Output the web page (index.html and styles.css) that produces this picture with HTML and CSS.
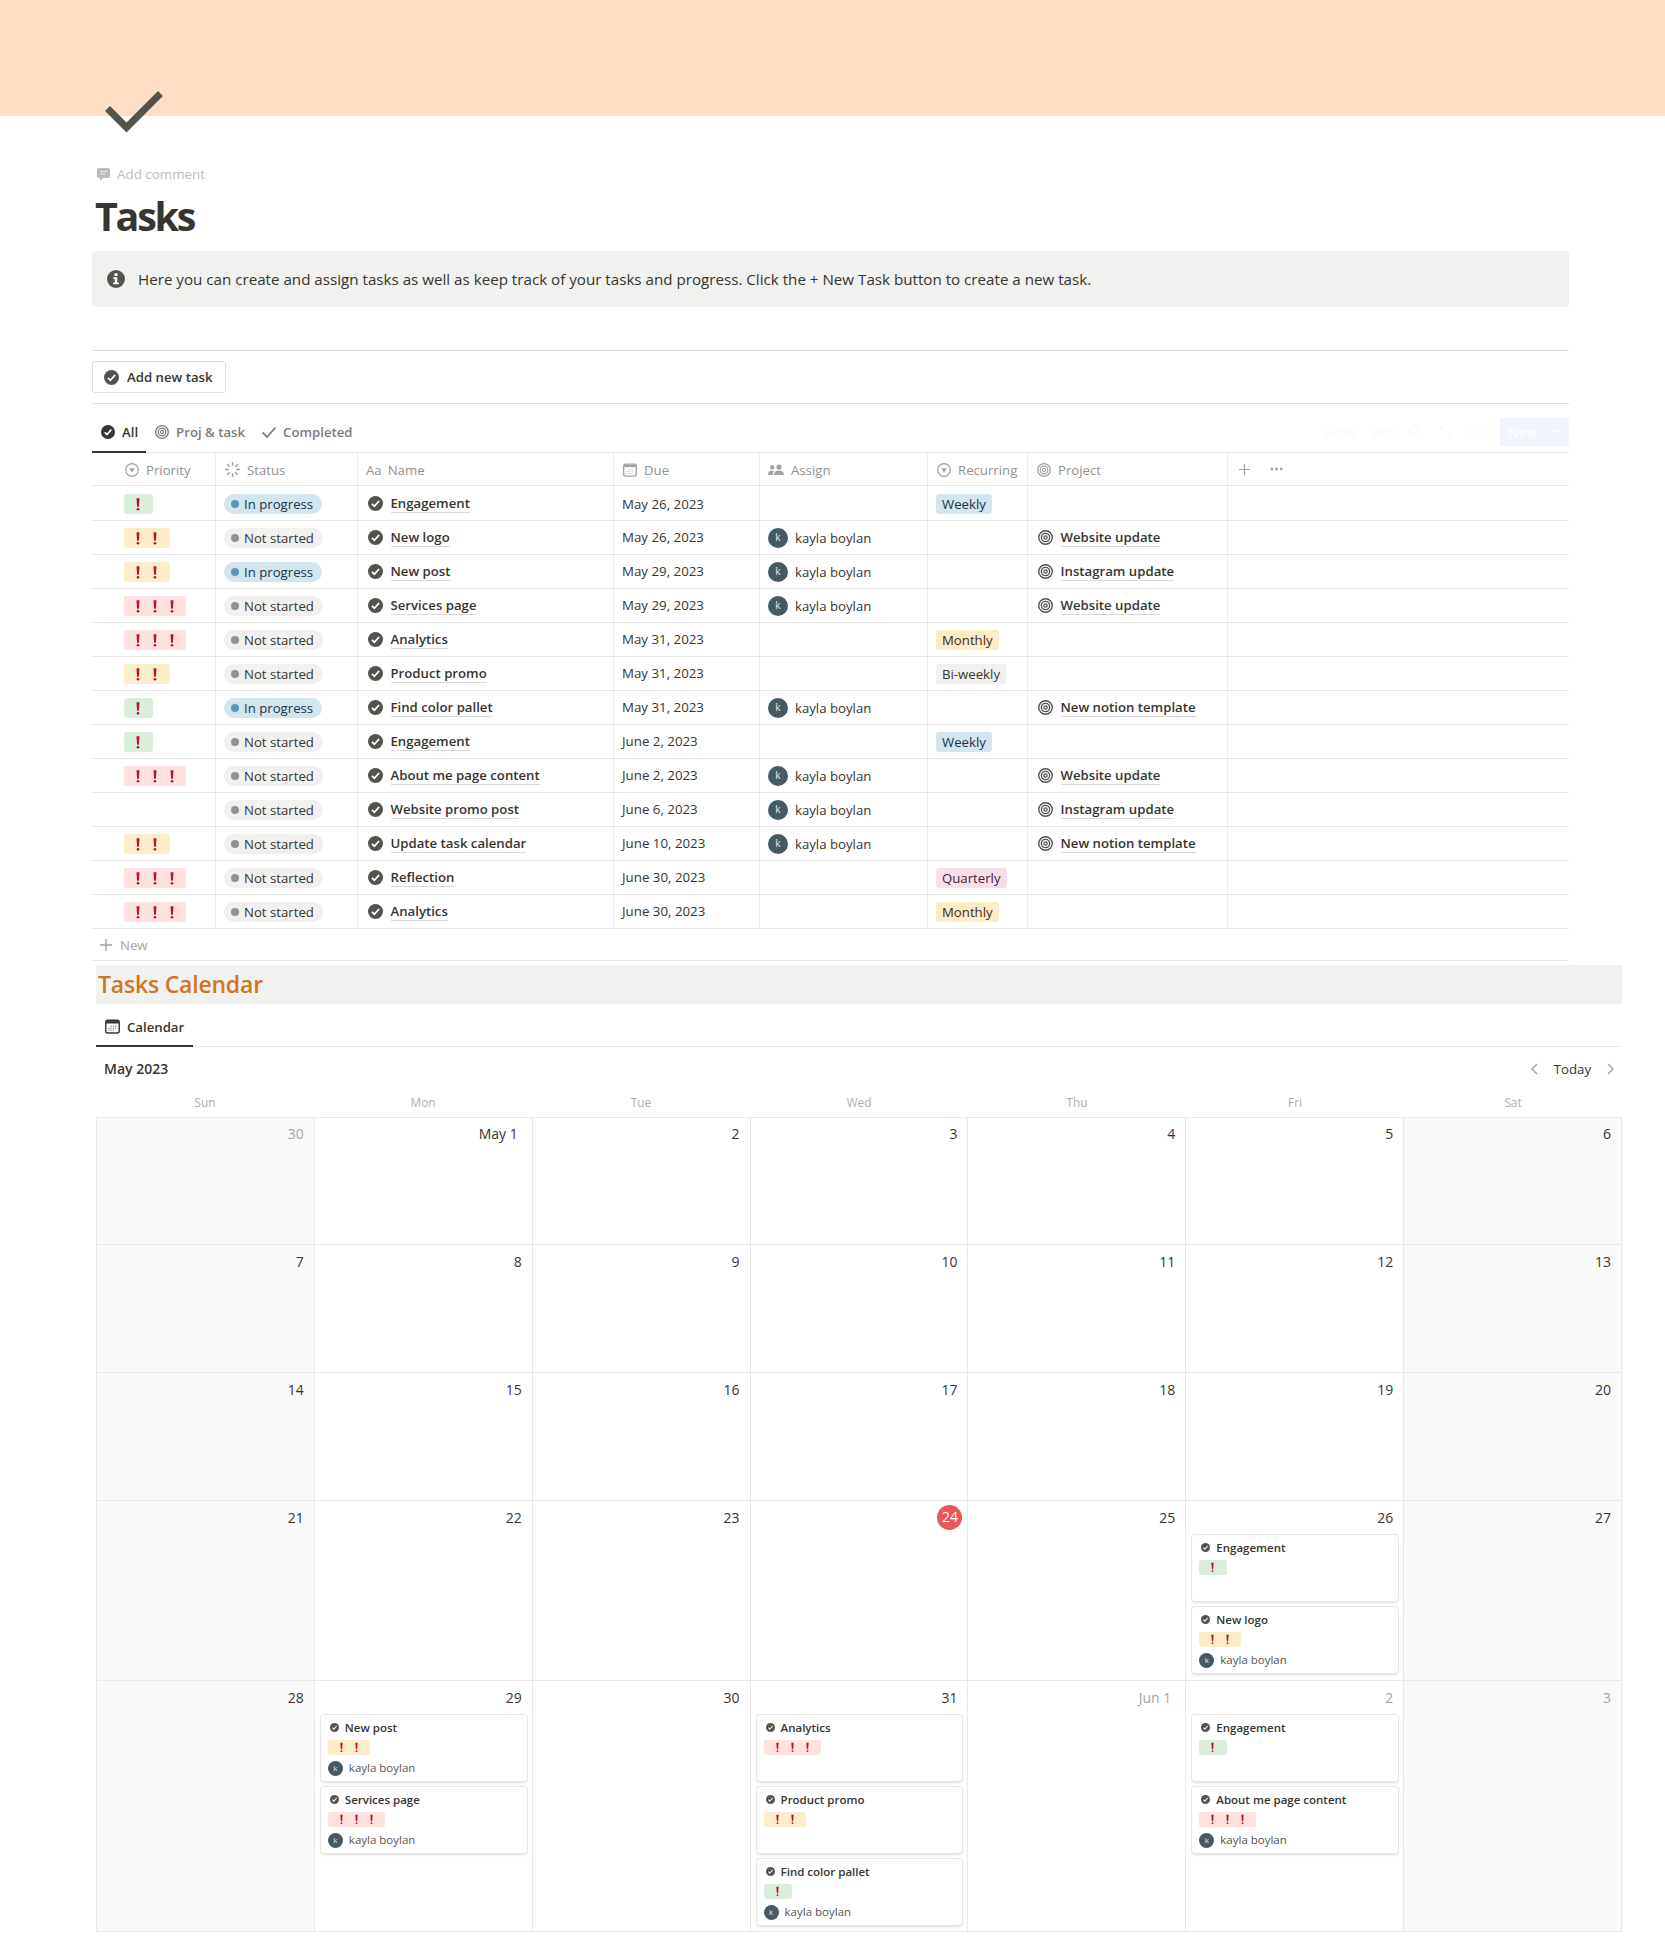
FILE: index.html
```
<!DOCTYPE html>
<html lang="en">
<head>
    <meta charset="UTF-8">
    <meta name="viewport" content="width=device-width, initial-scale=1.0">
    <title>Tasks</title>
    <link rel="stylesheet" href="styles.css">
</head>
<body>
    <!-- Shared icons -->
    <svg class="sprite" width="0" height="0">
        <symbol id="done" viewBox="0 0 16 16">
            <circle cx="8" cy="8" r="8" fill="currentColor"/>
            <path d="M4.2 8.3l2.6 2.6 5-5.6" fill="none" stroke="#fff" stroke-width="1.9"/>
        </symbol>
        <symbol id="target" viewBox="0 0 16 16">
            <g fill="none" stroke="currentColor">
                <circle cx="8" cy="8" r="7.2" stroke-width="1.5"/>
                <circle cx="8" cy="8" r="4.4" stroke-width="1.4"/>
                <circle cx="8" cy="8" r="1.8" stroke-width="1.3"/>
            </g>
        </symbol>
        <symbol id="select" viewBox="0 0 16 16">
            <circle cx="8" cy="8" r="7.2" fill="none" stroke="currentColor" stroke-width="1.4"/>
            <path d="M4.8 6h6.4L8 11.2z" fill="currentColor"/>
        </symbol>
        <symbol id="calendar" viewBox="0 0 16 16">
            <rect x=".8" y="1.3" width="14.4" height="13.6" rx="2.2" fill="none" stroke="currentColor" stroke-width="1.5"/>
            <path d="M1 2.2h14v2.6H1z" fill="currentColor"/>
            <path d="M6 7.6h7M3.4 9.8h9.4M3.4 12h6.5" stroke="currentColor" stroke-width="1.1" stroke-dasharray="1.4 1" opacity=".6"/>
        </symbol>
        <symbol id="bang" viewBox="0 0 4 13">
            <path d="M.5.2h3L2.9 8.800H1.1z" fill="#b3142f"/>
            <circle cx="2" cy="11.3" r="1.3" fill="#b3142f"/>
        </symbol>
        <symbol id="plus" viewBox="0 0 12 12">
            <path d="M6 0v12M0 6h12" stroke="currentColor" stroke-width="1.3"/>
        </symbol>
        <symbol id="dots" viewBox="0 0 14 4">
            <g fill="currentColor"><circle cx="2" cy="2" r="1.6"/><circle cx="7" cy="2" r="1.6"/><circle cx="12" cy="2" r="1.6"/></g>
        </symbol>
    </svg>

    <div class="cover"></div>

    <div class="page">
        <svg class="page-icon" viewBox="0 0 58 42"><path d="M2.500 17.500L21.500 36.500L55.500 2.500" fill="none" stroke="#55534e" stroke-width="7"/></svg>

        <div class="add-comment">
            <svg width="13" height="13" viewBox="0 0 13 13"><path d="M2 0h9q2 0 2 2v6q0 2-2 2H6l-3 3v-3H2q-2 0-2-2V2q0-2 2-2z" fill="currentColor"/><path d="M3 3.500h7M3 6h5" stroke="#fff" opacity=".7"/></svg>
            Add comment
        </div>
        <h1 class="title">Tasks</h1>

        <div class="callout">
            <svg width="18" height="18" viewBox="0 0 18 18"><circle cx="9" cy="9" r="9" fill="#55534e"/><circle cx="9" cy="4.600" r="1.700" fill="#fff"/><path d="M6.300 7.300h4v5.200h1.600v1.700H6.100v-1.700h1.700V9H6.300z" fill="#fff"/></svg>
            <span>Here you can create and assign tasks as well as keep track of your tasks and progress. Click the + New Task button to create a new task.</span>
        </div>

        <div class="toolbar">
            <button class="add-btn"><svg class="i15"><use href="#done"/></svg>Add new task</button>
        </div>

        <div class="tabs">
            <div class="tab active"><svg class="i14"><use href="#done"/></svg>All</div>
            <div class="tab"><svg class="i14"><use href="#target"/></svg>Proj &amp; task</div>
            <div class="tab"><svg class="i14" viewBox="0 0 14 14"><path d="M.5 7.500L5 12 13.500 2.500" fill="none" stroke="currentColor" stroke-width="1.800"/></svg>Completed</div>
            <div class="actions">
                <span class="filter">Filter</span>
                <span class="sort">Sort</span>
                <svg width="14" height="14" viewBox="0 0 14 14"><path d="M9.500 9.500L13 13M10 5.500a4.500 4.500 0 1 1-9 0 4.500 4.500 0 0 1 9 0z" fill="none" stroke="currentColor" stroke-width="1.600"/></svg>
                <svg width="12" height="12" viewBox="0 0 12 12"><path d="M0 4V0h4M1 1l3.500 3.500M12 8v4H8M11 11L7.500 7.500" fill="none" stroke="currentColor" stroke-width="1.500"/></svg>
                <svg width="14" height="4"><use href="#dots"/></svg>
                <div class="new-btn">New<svg width="8" height="6" viewBox="0 0 8 6"><path d="M1 1l3 3 3-3" fill="none" stroke="#fff" stroke-width="1.500"/></svg></div>
            </div>
        </div>

        <div class="table">
            <div class="row head">
                <div class="priority"><svg class="i14"><use href="#select"/></svg>Priority</div>
                <div><svg class="i15" viewBox="0 0 16 16"><path d="M8 0v4M8 12v4M0 8h4M12 8h4M2.300 2.300l2.800 2.800M10.900 10.900l2.800 2.800M2.300 13.700l2.800-2.800M10.900 5.100l2.800-2.800" stroke="currentColor" stroke-width="1.500"/></svg>Status</div>
                <div><span class="aa">Aa</span>Name</div>
                <div><svg class="i14"><use href="#calendar"/></svg>Due</div>
                <div><svg class="people" viewBox="0 0 16 12"><g fill="currentColor"><circle cx="4.200" cy="3.200" r="2.200"/><circle cx="11" cy="3" r="2.600"/><path d="M0 11q0-4.400 4.400-4.400 1 0 1.500.3Q4.800 8.500 4.800 11zM6 11q0-4.600 5-4.600t5 4.600z"/></g></svg>Assign</div>
                <div><svg class="i14"><use href="#select"/></svg>Recurring</div>
                <div><svg class="i14"><use href="#target"/></svg>Project</div>
                <div class="more"><svg width="11" height="11"><use href="#plus"/></svg><svg width="13" height="4"><use href="#dots"/></svg></div>
            </div>
            <div class="row first">
                <div class="priority"><span class="prio low"><svg><use href="#bang"/></svg></span></div>
                <div><span class="status progress">In progress</span></div>
                <div class="link"><svg class="i15"><use href="#done"/></svg><b>Engagement</b></div>
                <div class="due">May 26, 2023</div>
                <div></div>
                <div><span class="tag blue">Weekly</span></div>
                <div></div><div></div>
            </div>
            <div class="row">
                <div class="priority"><span class="prio mid"><svg><use href="#bang"/></svg><svg><use href="#bang"/></svg></span></div>
                <div><span class="status">Not started</span></div>
                <div class="link"><svg class="i15"><use href="#done"/></svg><b>New logo</b></div>
                <div class="due">May 26, 2023</div>
                <div class="person"><i>k</i>kayla boylan</div>
                <div></div>
                <div class="link"><svg class="i15"><use href="#target"/></svg><b>Website update</b></div><div></div>
            </div>
            <div class="row">
                <div class="priority"><span class="prio mid"><svg><use href="#bang"/></svg><svg><use href="#bang"/></svg></span></div>
                <div><span class="status progress">In progress</span></div>
                <div class="link"><svg class="i15"><use href="#done"/></svg><b>New post</b></div>
                <div class="due">May 29, 2023</div>
                <div class="person"><i>k</i>kayla boylan</div>
                <div></div>
                <div class="link"><svg class="i15"><use href="#target"/></svg><b>Instagram update</b></div><div></div>
            </div>
            <div class="row">
                <div class="priority"><span class="prio high"><svg><use href="#bang"/></svg><svg><use href="#bang"/></svg><svg><use href="#bang"/></svg></span></div>
                <div><span class="status">Not started</span></div>
                <div class="link"><svg class="i15"><use href="#done"/></svg><b>Services page</b></div>
                <div class="due">May 29, 2023</div>
                <div class="person"><i>k</i>kayla boylan</div>
                <div></div>
                <div class="link"><svg class="i15"><use href="#target"/></svg><b>Website update</b></div><div></div>
            </div>
            <div class="row">
                <div class="priority"><span class="prio high"><svg><use href="#bang"/></svg><svg><use href="#bang"/></svg><svg><use href="#bang"/></svg></span></div>
                <div><span class="status">Not started</span></div>
                <div class="link"><svg class="i15"><use href="#done"/></svg><b>Analytics</b></div>
                <div class="due">May 31, 2023</div>
                <div></div>
                <div><span class="tag yellow">Monthly</span></div>
                <div></div><div></div>
            </div>
            <div class="row">
                <div class="priority"><span class="prio mid"><svg><use href="#bang"/></svg><svg><use href="#bang"/></svg></span></div>
                <div><span class="status">Not started</span></div>
                <div class="link"><svg class="i15"><use href="#done"/></svg><b>Product promo</b></div>
                <div class="due">May 31, 2023</div>
                <div></div>
                <div><span class="tag">Bi-weekly</span></div>
                <div></div><div></div>
            </div>
            <div class="row">
                <div class="priority"><span class="prio low"><svg><use href="#bang"/></svg></span></div>
                <div><span class="status progress">In progress</span></div>
                <div class="link"><svg class="i15"><use href="#done"/></svg><b>Find color pallet</b></div>
                <div class="due">May 31, 2023</div>
                <div class="person"><i>k</i>kayla boylan</div>
                <div></div>
                <div class="link"><svg class="i15"><use href="#target"/></svg><b>New notion template</b></div><div></div>
            </div>
            <div class="row">
                <div class="priority"><span class="prio low"><svg><use href="#bang"/></svg></span></div>
                <div><span class="status">Not started</span></div>
                <div class="link"><svg class="i15"><use href="#done"/></svg><b>Engagement</b></div>
                <div class="due">June 2, 2023</div>
                <div></div>
                <div><span class="tag blue">Weekly</span></div>
                <div></div><div></div>
            </div>
            <div class="row">
                <div class="priority"><span class="prio high"><svg><use href="#bang"/></svg><svg><use href="#bang"/></svg><svg><use href="#bang"/></svg></span></div>
                <div><span class="status">Not started</span></div>
                <div class="link"><svg class="i15"><use href="#done"/></svg><b>About me page content</b></div>
                <div class="due">June 2, 2023</div>
                <div class="person"><i>k</i>kayla boylan</div>
                <div></div>
                <div class="link"><svg class="i15"><use href="#target"/></svg><b>Website update</b></div><div></div>
            </div>
            <div class="row">
                <div class="priority"></div>
                <div><span class="status">Not started</span></div>
                <div class="link"><svg class="i15"><use href="#done"/></svg><b>Website promo post</b></div>
                <div class="due">June 6, 2023</div>
                <div class="person"><i>k</i>kayla boylan</div>
                <div></div>
                <div class="link"><svg class="i15"><use href="#target"/></svg><b>Instagram update</b></div><div></div>
            </div>
            <div class="row">
                <div class="priority"><span class="prio mid"><svg><use href="#bang"/></svg><svg><use href="#bang"/></svg></span></div>
                <div><span class="status">Not started</span></div>
                <div class="link"><svg class="i15"><use href="#done"/></svg><b>Update task calendar</b></div>
                <div class="due">June 10, 2023</div>
                <div class="person"><i>k</i>kayla boylan</div>
                <div></div>
                <div class="link"><svg class="i15"><use href="#target"/></svg><b>New notion template</b></div><div></div>
            </div>
            <div class="row">
                <div class="priority"><span class="prio high"><svg><use href="#bang"/></svg><svg><use href="#bang"/></svg><svg><use href="#bang"/></svg></span></div>
                <div><span class="status">Not started</span></div>
                <div class="link"><svg class="i15"><use href="#done"/></svg><b>Reflection</b></div>
                <div class="due">June 30, 2023</div>
                <div></div>
                <div><span class="tag pink">Quarterly</span></div>
                <div></div><div></div>
            </div>
            <div class="row">
                <div class="priority"><span class="prio high"><svg><use href="#bang"/></svg><svg><use href="#bang"/></svg><svg><use href="#bang"/></svg></span></div>
                <div><span class="status">Not started</span></div>
                <div class="link"><svg class="i15"><use href="#done"/></svg><b>Analytics</b></div>
                <div class="due">June 30, 2023</div>
                <div></div>
                <div><span class="tag yellow">Monthly</span></div>
                <div></div><div></div>
            </div>
            <div class="new-row"><svg width="12" height="12"><use href="#plus"/></svg>New</div>
        </div>
    </div>

    <!-- Calendar -->
    <div class="calendar">
        <h2 class="cal-title">Tasks Calendar</h2>
        <div class="cal-tabs"><div class="cal-tab"><svg class="i15"><use href="#calendar"/></svg>Calendar</div></div>
        <div class="cal-nav">
            <b>May 2023</b>
            <div class="nav-right">
                <svg width="7" height="12" viewBox="0 0 7 12"><path d="M6 1L1 6l5 5" fill="none" stroke="#a5a5a2" stroke-width="1.500"/></svg>
                <span>Today</span>
                <svg width="7" height="12" viewBox="0 0 7 12"><path d="M1 1l5 5-5 5" fill="none" stroke="#a5a5a2" stroke-width="1.500"/></svg>
            </div>
        </div>
        <div class="weekdays">
            <div>Sun</div><div>Mon</div><div>Tue</div><div>Wed</div><div>Thu</div><div>Fri</div><div>Sat</div>
        </div>
        <div class="days">
            <div class="day off muted"><span>30</span></div>
            <div class="day month-start"><span>May 1</span></div>
            <div class="day"><span>2</span></div>
            <div class="day"><span>3</span></div>
            <div class="day"><span>4</span></div>
            <div class="day"><span>5</span></div>
            <div class="day off"><span>6</span></div>

            <div class="day off"><span>7</span></div>
            <div class="day"><span>8</span></div>
            <div class="day"><span>9</span></div>
            <div class="day"><span>10</span></div>
            <div class="day"><span>11</span></div>
            <div class="day"><span>12</span></div>
            <div class="day off"><span>13</span></div>

            <div class="day off"><span>14</span></div>
            <div class="day"><span>15</span></div>
            <div class="day"><span>16</span></div>
            <div class="day"><span>17</span></div>
            <div class="day"><span>18</span></div>
            <div class="day"><span>19</span></div>
            <div class="day off"><span>20</span></div>

            <div class="day off"><span>21</span></div>
            <div class="day"><span>22</span></div>
            <div class="day"><span>23</span></div>
            <div class="day today"><span>24</span></div>
            <div class="day"><span>25</span></div>
            <div class="day"><span>26</span>
                <div class="card">
                    <div class="card-title"><svg><use href="#done"/></svg>Engagement</div>
                    <div class="prio low"><svg><use href="#bang"/></svg></div>
                </div>
                <div class="card">
                    <div class="card-title"><svg><use href="#done"/></svg>New logo</div>
                    <div class="prio mid"><svg><use href="#bang"/></svg><svg><use href="#bang"/></svg></div>
                    <div class="person"><i>k</i>kayla boylan</div>
                </div>
            </div>
            <div class="day off"><span>27</span></div>

            <div class="day off"><span>28</span></div>
            <div class="day"><span>29</span>
                <div class="card">
                    <div class="card-title"><svg><use href="#done"/></svg>New post</div>
                    <div class="prio mid"><svg><use href="#bang"/></svg><svg><use href="#bang"/></svg></div>
                    <div class="person"><i>k</i>kayla boylan</div>
                </div>
                <div class="card">
                    <div class="card-title"><svg><use href="#done"/></svg>Services page</div>
                    <div class="prio high"><svg><use href="#bang"/></svg><svg><use href="#bang"/></svg><svg><use href="#bang"/></svg></div>
                    <div class="person"><i>k</i>kayla boylan</div>
                </div>
            </div>
            <div class="day"><span>30</span></div>
            <div class="day"><span>31</span>
                <div class="card">
                    <div class="card-title"><svg><use href="#done"/></svg>Analytics</div>
                    <div class="prio high"><svg><use href="#bang"/></svg><svg><use href="#bang"/></svg><svg><use href="#bang"/></svg></div>
                </div>
                <div class="card">
                    <div class="card-title"><svg><use href="#done"/></svg>Product promo</div>
                    <div class="prio mid"><svg><use href="#bang"/></svg><svg><use href="#bang"/></svg></div>
                </div>
                <div class="card">
                    <div class="card-title"><svg><use href="#done"/></svg>Find color pallet</div>
                    <div class="prio low"><svg><use href="#bang"/></svg></div>
                    <div class="person"><i>k</i>kayla boylan</div>
                </div>
            </div>
            <div class="day muted month-start"><span>Jun 1</span></div>
            <div class="day muted"><span>2</span>
                <div class="card">
                    <div class="card-title"><svg><use href="#done"/></svg>Engagement</div>
                    <div class="prio low"><svg><use href="#bang"/></svg></div>
                </div>
                <div class="card">
                    <div class="card-title"><svg><use href="#done"/></svg>About me page content</div>
                    <div class="prio high"><svg><use href="#bang"/></svg><svg><use href="#bang"/></svg><svg><use href="#bang"/></svg></div>
                    <div class="person"><i>k</i>kayla boylan</div>
                </div>
            </div>
            <div class="day off muted"><span>3</span></div>
        </div>
    </div>
</body>
</html>
```
FILE: styles.css
```
* {
    box-sizing: border-box;
}

body {
    margin: 0;
    background: #fff;
    color: #37352f;
    font-family: 'Open Sans', 'Noto Sans', sans-serif;
    font-size: 13.2px;
    line-height: 20px;
}

svg {
    display: block;
    flex-shrink: 0;
}

.sprite {
    position: absolute;
}

.i15 {
    width: 15px;
    height: 15px;
}

.i14 {
    width: 14px;
    height: 14px;
}

.cover {
    height: 116px;
    background: #ffdec6;
}

.page {
    width: 1477px;
    margin-left: 92px;
}

/* Overlaps the bottom edge of the cover */
.page-icon {
    position: relative;
    width: 58px;
    height: 42px;
    margin: -25px 0 0 13px;
}

.add-comment {
    display: flex;
    align-items: center;
    gap: 7px;
    margin-top: 31px;
    padding-left: 5px;
    height: 20px;
    font-size: 13.4px;
    color: #bdbcba;
}

.title {
    margin: 9px 0 0 3px;
    height: 46px;
    font-size: 39.500px;
    line-height: 46px;
    font-weight: 700;
    letter-spacing: -2.3px;
}

.callout {
    display: flex;
    align-items: center;
    gap: 13px;
    height: 56px;
    margin-top: 12px;
    padding-left: 15px;
    background: #f1f1ef;
    border-radius: 3px;
    font-size: 15.17px;
}

.toolbar {
    display: flex;
    align-items: center;
    height: 54px;
    margin-top: 43px;
    border-top: 1px solid #dededc;
    border-bottom: 1px solid #dededc;
}

.add-btn {
    display: flex;
    align-items: center;
    gap: 8px;
    height: 32px;
    width: 134px;
    padding: 0 0 0 11px;
    background: #fff;
    border: 1px solid #dededc;
    border-radius: 3px;
    font: inherit;
    font-weight: 600;
    color: #37352f;
}

.add-btn svg {
    color: #55534e;
}

.tabs {
    display: flex;
    height: 49px;
    border-bottom: 1px solid #e6e6e4;
}

.tab {
    display: flex;
    align-items: center;
    gap: 7px;
    height: 49px;
    padding: 6px 8px 0 9px;
    font-weight: 600;
    color: #7d7c78;
}

.tab.active {
    color: #37352f;
    border-bottom: 2px solid #37352f;
    padding-top: 8px;
}

.actions {
    display: flex;
    align-items: center;
    margin-left: auto;
    padding-top: 7px;
    gap: 17px;
    color: #f9f9f9;
}

.filter {
    margin-right: -4px;
}

.sort {
    margin-right: -3px;
}

.new-btn {
    display: flex;
    align-items: center;
    justify-content: space-between;
    width: 69px;
    height: 28px;
    padding: 0 8px;
    background: #f0f6fd;
    color: #fff;
    font-weight: 600;
}

.row {
    display: grid;
    grid-template-columns: 124px 142px 256px 146px 168px 100px 200px 1fr;
    height: 34px;
    border-bottom: 1px solid #e6e6e4;
}

.row > div {
    display: flex;
    align-items: center;
    padding: 1px 0 0 8px;
    border-right: 1px solid #ececea;
    white-space: nowrap;
}

.row > div:last-child {
    border-right: none;
}

.row > .priority {
    padding-left: 32px;
}

.row.first {
    height: 35px;
}

.row.first > div {
    padding-top: 2px;
}

.row.head {
    height: 33px;
    color: #92918e;
}

.head > div {
    gap: 7px;
}

.row.head svg {
    margin-left: 1px;
    color: #a3a29f;
}

.row.head .aa {
    margin-right: -1px;
}

.row.head .people {
    width: 16px;
    height: 12px;
    margin-left: 0;
}

.row.head .more {
    gap: 19px;
    padding-left: 10px;
    padding-top: 0;
}

.prio {
    display: flex;
    align-items: center;
    width: 29px;
    height: 20px;
    padding-left: 12px;
    gap: 13px;
    border-radius: 3px;
}

.prio svg {
    width: 4px;
    height: 13px;
}

.low {
    background: #dbeddb;
}

.mid {
    width: 46px;
    background: #fdecc8;
}

.high {
    width: 62px;
    background: #ffe2dd;
}

.status {
    display: flex;
    align-items: center;
    gap: 5px;
    height: 20px;
    padding: 0 9px 0 7px;
    border-radius: 10px;
    background: #f1f0ef;
}

.status::before {
    content: "";
    width: 8px;
    height: 8px;
    border-radius: 50%;
    background: #91918e;
}

.status.progress {
    background: #d3e5ef;
    color: #183347;
}

.status.progress::before {
    background: #5b97bd;
}

.row > .link {
    gap: 7.500px;
    padding-left: 10px;
    padding-bottom: 1px;
}

.link svg {
    color: #55534e;
}

.link b {
    font-weight: 600;
    line-height: 17px;
    border-bottom: 1px solid #d9d9d7;
}

.row > .due {
    padding-top: 0;
    padding-bottom: 1px;
    font-size: 13.3px;
}

.person {
    display: flex;
    align-items: center;
    gap: 7px;
}

.person i {
    width: 20px;
    height: 20px;
    border-radius: 50%;
    background: #455a64;
    color: #e8ecee;
    font-style: normal;
    font-size: 10px;
    text-align: center;
    line-height: 19px;
}

.tag {
    height: 20px;
    padding: 0 6px;
    border-radius: 3px;
    background: #f1f0ef;
}

.blue {
    background: #d3e5ef;
    color: #183347;
}

.yellow {
    background: #fdecc8;
    color: #402c1b;
}

.pink {
    background: #f5e0e9;
    color: #4c2337;
}

.new-row {
    display: flex;
    align-items: center;
    gap: 8px;
    height: 32px;
    padding-left: 8px;
    border-bottom: 1px solid #e6e6e4;
    color: #a3a29f;
}

.calendar {
    width: 1526px;
    margin: 4px 0 0 96px;
}

.cal-title {
    margin: 0;
    height: 39px;
    padding-left: 2px;
    background: #f1f1ef;
    color: #cf7625;
    font-size: 23px;
    line-height: 39px;
    font-weight: 600;
    letter-spacing: -0.2px;
}

.cal-tabs {
    height: 43px;
    border-bottom: 1px solid #e9e9e7;
}

.cal-tab {
    display: flex;
    align-items: center;
    gap: 7px;
    width: 97px;
    height: 43px;
    padding: 4px 0 0 9px;
    border-bottom: 2px solid #37352f;
    font-weight: 600;
}

.cal-nav {
    display: flex;
    justify-content: space-between;
    align-items: center;
    height: 43px;
    padding: 0 8px 0 8px;
}

.cal-nav b {
    font-size: 14px;
    font-weight: 600;
}

.nav-right {
    display: flex;
    align-items: center;
    gap: 16px;
}

.weekdays {
    display: grid;
    grid-template-columns: repeat(7, 1fr);
    height: 27px;
    font-size: 11.800px;
    line-height: 25px;
    text-align: center;
    color: #aeadab;
}

.days {
    display: grid;
    grid-template-columns: repeat(7, 1fr);
    grid-template-rows: 127px 128px 128px 180px 251px;
    border: 1px solid #e9e9e7;
    border-right: none;
    border-bottom: none;
}

.day {
    border-right: 1px solid #e9e9e7;
    border-bottom: 1px solid #e9e9e7;
    padding: 5px 5px 0 6px;
    min-width: 0;
}

.day:nth-child(-n+7) {
    padding-top: 4px;
}

.day > span {
    display: block;
    height: 24px;
    margin-bottom: 5px;
    padding-right: 5px;
    font-size: 14px;
    line-height: 24px;
    text-align: right;
}

.month-start > span {
    padding-right: 9px;
}

.off {
    background: #fafafa;
}

.muted > span {
    color: #a5a4a1;
}

.today > span {
    width: 25px;
    height: 25px;
    margin-left: auto;
    margin-top: -1px;
    padding: 0;
    border-radius: 50%;
    background: #eb5757;
    color: #fff;
    text-align: center;
}

.card {
    height: 66px;
    margin-bottom: 6px;
    padding: 4px 7px 0;
    background: #fff;
    border-radius: 3px;
    box-shadow: 0 0 0 1px #e6e6e5, 0 2px 3px #dededc;
    font-size: 11.500px;
}

.card-title {
    display: flex;
    align-items: center;
    gap: 6px;
    height: 17px;
    padding-left: 2px;
    font-weight: 600;
}

.card-title svg {
    width: 9px;
    height: 9px;
    color: #55534e;
}

.card .prio {
    height: 15px;
    margin-top: 4px;
    width: 28px;
    gap: 12px;
}

.card .prio svg {
    width: 3px;
    height: 11px;
}

.card .mid {
    width: 42px;
}

.card .high {
    width: 57px;
}

.card .person {
    margin-top: 4px;
    height: 18px;
    gap: 6px;
    color: #55534e;
}

.card .person i {
    width: 15px;
    height: 15px;
    font-size: 8px;
    line-height: 14px;
}
```
